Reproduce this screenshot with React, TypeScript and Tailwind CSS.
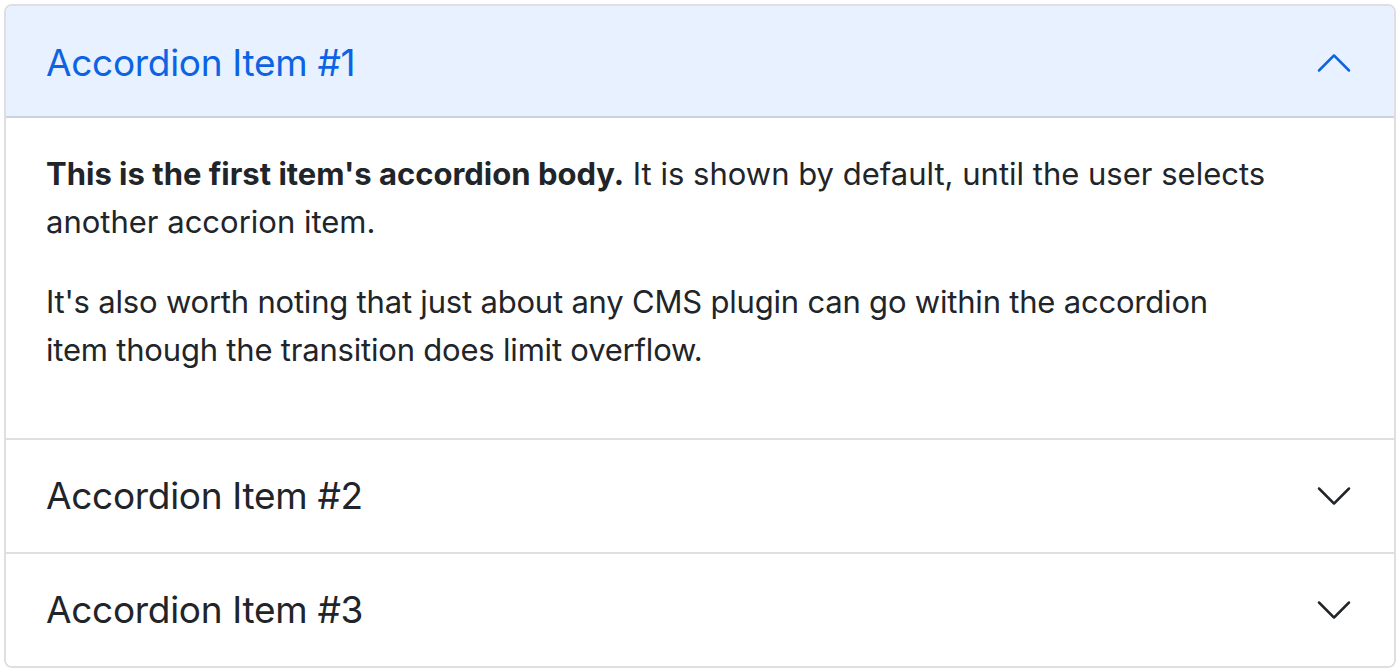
import { useState } from "react";

const items = [
    { id: 1, title: "Accordion Item #1" },
    { id: 2, title: "Accordion Item #2" },
    { id: 3, title: "Accordion Item #3" }
];

function Chevron({ open }: { open: boolean }) {
    return (
        <svg
            viewBox="0 0 16 16"
            className={open ? "w-10 h-10 shrink-0 rotate-180 text-[#0c63e4]" : "w-10 h-10 shrink-0 text-[#212529]"}
            fill="currentColor"
        >
            <path
                fillRule="evenodd"
                d="M1.646 4.646a.5.5 0 0 1 .708 0L8 10.293l5.646-5.647a.5.5 0 0 1 .708.708l-6 6a.5.5 0 0 1-.708 0l-6-6a.5.5 0 0 1 0-.708z"
            />
        </svg>
    );
}

export default function App() {
    const [open, setOpen] = useState(1);
    return (
        <div className="p-1 bg-white font-['Inter',sans-serif] text-[#212529]">
            <div className="border-2 border-[#dfdfdf] rounded-[8px] overflow-hidden">
                {items.map((item, i) => {
                    const isOpen = open === item.id;
                    return (
                        <div key={item.id} className={i > 0 ? "border-t-2 border-[#dfdfdf]" : ""}>
                            <button
                                onClick={() => setOpen(isOpen ? 0 : item.id)}
                                className={
                                    isOpen
                                        ? "w-full h-[112px] px-10 pt-1 flex items-center justify-between text-left text-[37px] bg-[#e7f1ff] text-[#0c63e4] border-b-2 border-[#cad3df]"
                                        : "w-full h-[112px] px-10 flex items-center justify-between text-left text-[37px] bg-white text-[#212529]"
                                }
                            >
                                <span className="tracking-[-0.3px]">{item.title}</span>
                                <Chevron open={isOpen} />
                            </button>
                            {isOpen && (
                                <div className="px-10 pt-8 pb-8 text-[31px] leading-[48px]">
                                    <p className="mb-8">
                                        <strong className="font-bold">This is the first item's accordion body.</strong> It is shown by default, until the user selects
                                        <br />
                                        another accorion item.
                                    </p>
                                    <p className="mb-8 tracking-[-0.2px]">
                                        It's also worth noting that just about any CMS plugin can go within the accordion
                                        <br />
                                        item though the transition does limit overflow.
                                    </p>
                                </div>
                            )}
                        </div>
                    );
                })}
            </div>
        </div>
    );
}
